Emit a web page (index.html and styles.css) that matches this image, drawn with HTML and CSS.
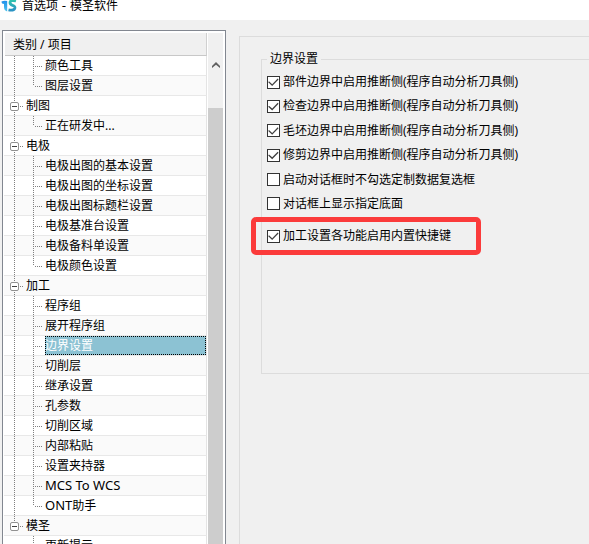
FILE: index.html
```html
<!DOCTYPE html>
<html lang="zh-CN">
<head>
<meta charset="utf-8">
<title>首选项 - 模圣软件</title>
<link rel="stylesheet" href="styles.css">
</head>
<body>
<header class="titlebar">
  <svg class="logo" viewBox="0 0 16 16" aria-hidden="true">
    <defs>
      <linearGradient id="s" x1="0" y1="0" x2="0" y2="1"><stop offset="0" stop-color="#2fc2ae"/><stop offset="1" stop-color="#2a93c4"/></linearGradient>
      <linearGradient id="i" x1="0" y1="0" x2="0" y2="1"><stop offset="0" stop-color="#1f8fea"/><stop offset="1" stop-color="#4cc4ee"/></linearGradient>
    </defs>
    <path d="M0.500 5.500Q3 4.200 6.200 5V15.500Q3 14.500 3 11V8Q0.500 8 0.500 5.500Z" fill="url(#i)"/>
    <circle cx="4" cy="2" r="1.800" fill="#1f8fea"/>
    <path d="M15 5Q9.300 3.500 9 6.500Q9 8.500 11.500 9.300Q14.500 10.200 13.800 12.300Q12.500 15 7.500 13.800" fill="none" stroke="url(#s)" stroke-width="2.800"/>
  </svg>
  <h1>首选项 - 模圣软件</h1>
</header>
<div class="content">
  <nav class="tree-panel" aria-label="类别 / 项目">
    <div class="tree">
      <div class="tree-head">类别 / 项目</div>
      <ul>
        <li class="item"><span>颜色工具</span></li>
        <li class="item last"><span>图层设置</span></li>
        <li class="group"><button aria-label="折叠"></button><span>制图</span></li>
        <li class="item last"><span>正在研发中...</span></li>
        <li class="group"><button aria-label="折叠"></button><span>电极</span></li>
        <li class="item"><span>电极出图的基本设置</span></li>
        <li class="item"><span>电极出图的坐标设置</span></li>
        <li class="item"><span>电极出图标题栏设置</span></li>
        <li class="item"><span>电极基准台设置</span></li>
        <li class="item"><span>电极备料单设置</span></li>
        <li class="item last"><span>电极颜色设置</span></li>
        <li class="group"><button aria-label="折叠"></button><span>加工</span></li>
        <li class="item"><span>程序组</span></li>
        <li class="item"><span>展开程序组</span></li>
        <li class="item selected"><span>边界设置</span></li>
        <li class="item"><span>切削层</span></li>
        <li class="item"><span>继承设置</span></li>
        <li class="item"><span>孔参数</span></li>
        <li class="item"><span>切削区域</span></li>
        <li class="item"><span>内部粘贴</span></li>
        <li class="item"><span>设置夹持器</span></li>
        <li class="item"><span><b>MCS To WCS</b></span></li>
        <li class="item last"><span><b>ONT</b>助手</span></li>
        <li class="group end"><button aria-label="折叠"></button><span>模圣</span></li>
        <li class="item after"><span>更新提示</span></li>
      </ul>
    </div>
    <div class="scrollbar">
      <button aria-label="向上滚动"><svg viewBox="0 0 8 6"><path d="M0 4L4 0L8 4V6L4 2.800L0 6Z" fill="#606060"/></svg></button>
      <div class="thumb"></div>
    </div>
  </nav>
  <main class="page">
    <fieldset>
      <legend>边界设置</legend>
      <div class="options">
        <label><input type="checkbox" checked>部件边界中启用推断侧(程序自动分析刀具侧)</label>
        <label><input type="checkbox" checked>检查边界中启用推断侧(程序自动分析刀具侧)</label>
        <label><input type="checkbox" checked>毛坯边界中启用推断侧(程序自动分析刀具侧)</label>
        <label><input type="checkbox" checked>修剪边界中启用推断侧(程序自动分析刀具侧)</label>
        <label><input type="checkbox">启动对话框时不勾选定制数据复选框</label>
        <label><input type="checkbox">对话框上显示指定底面</label>
      </div>
      <label class="marked"><input type="checkbox" checked>加工设置各功能启用内置快捷键</label>
    </fieldset>
  </main>
</div>
</body>
</html>
```
FILE: styles.css
```css
* { box-sizing: border-box; }

body {
  margin: 0;
  height: 100vh;
  overflow: hidden;
  display: flex;
  flex-direction: column;
  background: #f0f0f0;
  color: #000;
  font: 12px/20px "Noto Sans", "Noto Sans CJK SC", sans-serif;
}

.titlebar {
  flex: none;
  display: flex;
  align-items: flex-start;
  gap: 5px;
  height: 20px;
  padding-left: 1px;
  background: #fff;
}
.logo { width: 16px; height: 16px; margin-top: -4px; }
h1 {
  margin: -4px 0 0;
  font: 12px/20px "DejaVu Sans", "Noto Sans CJK SC", sans-serif;
}

.content { flex: 1; min-height: 0; display: flex; gap: 13px; }

.tree-panel {
  flex: 0 0 224px;
  display: flex;
  gap: 1px;
  margin: 10px 0 0 2px;
  padding: 2px 2px 0 1px;
  background: #fff;
  border: 1px solid #828790;
  border-bottom: 0;
  overflow: hidden;
}
.tree { flex: 1; }
.tree-head {
  height: 23px;
  margin-left: 1px;
  padding-left: 8px;
  line-height: 24px;
  background: #f0f0f0;
  border-right: 1px solid #d0d0d0;
  border-bottom: 1px solid #c8c8c8;
}
ul { margin: 0; padding: 0; list-style: none; }

li {
  position: relative;
  display: flex;
  height: 20px;
  border-right: 1px solid #e4e4e4;
  border-bottom: 1px solid #e8e8e8;
}
li:nth-child(even) { background: #fafafa; }
li span { flex: 1; white-space: nowrap; }
li b { font-size: 13px; font-weight: 400; line-height: 16px; }
.item { padding-left: 41px; }
.group { padding-left: 6px; gap: 7px; align-items: center; line-height: 18px; }

/* dotted tree guides */
li::before, .item::after {
  content: "";
  position: absolute;
  top: 0;
  width: 1px;
  height: 20px;
  background: repeating-linear-gradient(#808080 0 1px, transparent 1px 2px);
}
li::before { left: 10px; }
.item::after { left: 29px; }
.last::after, .end::before { height: 10px; }
.after::before { display: none; }
.item span { position: relative; }
.item span::before, .group span::before {
  content: "";
  position: absolute;
  top: 10px;
  height: 1px;
  background: repeating-linear-gradient(90deg, #808080 0 1px, transparent 1px 2px);
}
.item span::before { left: -10px; width: 8px; }
.group span::before { left: 16px; width: 4px; }

.group button {
  position: relative;
  width: 9px;
  height: 9px;
  margin-top: 2px;
  padding: 0;
  border: 1px solid #919191;
  border-radius: 2px;
  background: linear-gradient(#404040, #404040) center / 5px 1px no-repeat #fff;
}

.selected span {
  height: 19px;
  background: #8cc2d3;
  color: #fff;
  outline: 1px dotted #000;
  outline-offset: -1px;
}

.scrollbar { flex: 0 0 15px; display: flex; flex-direction: column; background: #f0f0f0; }
.scrollbar button {
  display: flex;
  height: 75px;
  justify-content: center;
  padding: 29px 0 0;
  border: 0;
  background: none;
}
.scrollbar svg { width: 8px; height: 6px; }
.thumb { flex: 1; background: #cdcdcd; }

.page {
  flex: 1;
  margin-top: 16px;
  padding: 12px 0 0 21px;
  border: solid #dcdcdc;
  border-width: 1px 0 0 1px;
}
fieldset {
  display: flex;
  flex-direction: column;
  align-items: flex-start;
  gap: 3px;
  height: 325px;
  margin: 0;
  padding: 3px 0 0 5px;
  border: 1px solid #dcdcdc;
  border-right: 0;
}
legend { padding: 0 3px; }
.options {
  display: flex;
  flex-direction: column;
  justify-content: space-between;
  height: 142px;
}
label { display: flex; align-items: center; gap: 3px; white-space: nowrap; }

input {
  appearance: none;
  flex: none;
  width: 13px;
  height: 13px;
  margin: 0;
  border: 1px solid #333;
  background: #fff;
}
input:checked::before {
  content: "";
  display: block;
  width: 11px;
  height: 11px;
  background: #404040;
  clip-path: polygon(9% 44%, 38% 70%, 88% 18%, 96% 27%, 38% 87%, 2% 53%);
}

.marked {
  margin-left: -16px;
  padding: 4px 25px 4px 11px;
  border: 5px solid #fb3b3b;
  border-radius: 5px;
}
```
